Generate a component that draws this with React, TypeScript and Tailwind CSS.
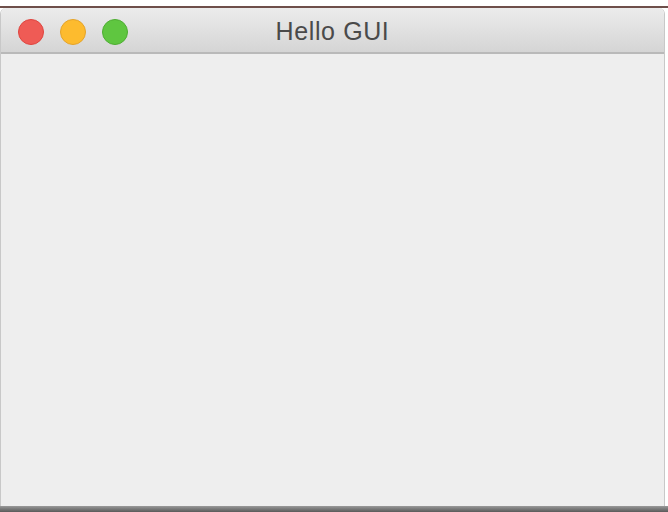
import React from "react";

export default function App() {
  return (
    <div className="w-[668px] h-[512px] bg-white flex flex-col overflow-hidden" style={{ fontFamily: '"Liberation Sans", Arial, sans-serif' }}>
      <div className="h-[6px] bg-white" />
      <div className="h-[2px] bg-[#6e4f4a]" />
      <div className="flex-1 flex flex-col mr-[3px] border-l border-r border-[#c8c8c8] rounded-tl-[6px] rounded-tr-[6px] overflow-hidden">
        <div className="relative h-[46px] flex items-center pt-[4px] bg-gradient-to-b from-[#ececec] to-[#d5d5d5] border-b-2 border-[#b9b9b9]">
          <div className="flex items-center gap-[16px] pl-[17px]">
            <span className="w-[26px] h-[26px] rounded-full bg-[#ef5b55] border border-[#e0443e]" />
            <span className="w-[26px] h-[26px] rounded-full bg-[#fdbb2e] border border-[#e5a328]" />
            <span className="w-[26px] h-[26px] rounded-full bg-[#5fc640] border border-[#4dae31]" />
          </div>
          <div className="absolute inset-0 flex items-center justify-center pt-[4px] text-[25px] text-[#4a4a4a] tracking-[0.6px]">
            Hello GUI
          </div>
        </div>
        <div className="flex-1 bg-[#eeeeee]" />
      </div>
      <div className="h-[6px] bg-gradient-to-b from-[#9a9a9a] to-[#5a5a5a]" />
    </div>
  );
}
